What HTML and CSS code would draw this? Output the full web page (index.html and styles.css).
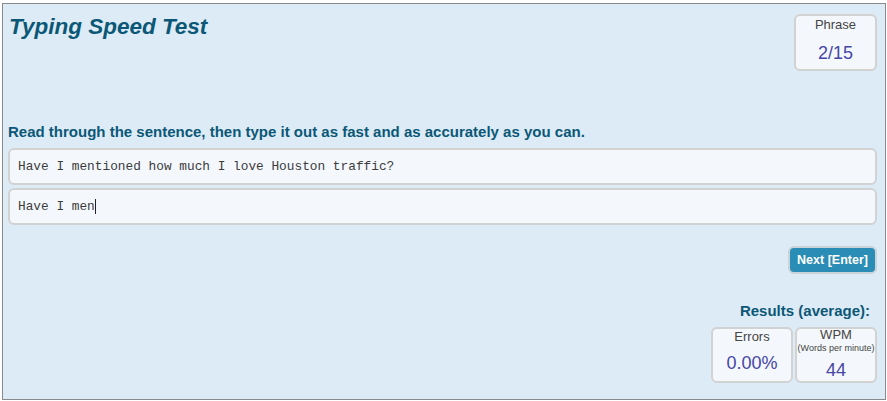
FILE: index.html
```html
<!DOCTYPE html>
<html lang="en">
<head>
    <meta charset="UTF-8">
    <meta name="viewport" content="width=device-width, initial-scale=1.0">
    <title>Typing Speed Test</title>
    <link rel="stylesheet" href="styles.css">
</head>
<body>
    <div class="test">
        <div class="test-header">
            <h1>Typing Speed Test</h1>
            <div class="stat stat-phrase">
                <div class="stat-label">Phrase</div>
                <div class="stat-value">2/15</div>
            </div>
        </div>

        <p class="instructions">Read through the sentence, then type it out as fast and as accurately as you can.</p>

        <div class="phrase-box">Have I mentioned how much I love Houston traffic?</div>
        <div class="phrase-box typed">Have I men<span class="caret"></span></div>

        <div class="actions">
            <button type="button">Next [Enter]</button>
        </div>

        <div class="results">
            <h2>Results (average):</h2>
            <div class="stats">
                <div class="stat">
                    <div class="stat-label">Errors</div>
                    <div class="stat-value">0.00%</div>
                </div>
                <div class="stat stat-wpm">
                    <div class="stat-label">WPM</div>
                    <div class="stat-sub">(Words per minute)</div>
                    <div class="stat-value">44</div>
                </div>
            </div>
        </div>
    </div>
</body>
</html>
```

FILE: styles.css
```css
:root {
    --page-bg: #ddebf7;
    --box-bg: #f4f8fc;
    --box-border: #d2d2d2;
    --heading: #0b5876;
    --value: #4646a6;
    --label: #444;
    --button: #2a8db5;
}

* {
    margin: 0;
    padding: 0;
    box-sizing: border-box;
}

body {
    font-family: "Liberation Sans", Arial, sans-serif;
    background: #fff;
}

.test {
    margin: 3px 0 0 2px;
    width: 884px;
    height: 397px;
    border: 1px solid #8a8a8a;
    background: var(--page-bg);
    padding: 10px 8px 0 5px;
}

.test-header {
    display: flex;
    justify-content: space-between;
    align-items: flex-start;
}

h1 {
    margin: 0 0 0 1px;
    font-size: 22.5px;
    line-height: 25px;
    font-style: italic;
    font-weight: bold;
    color: var(--heading);
}

.stat {
    width: 82px;
    height: 56px;
    border: 2px solid var(--box-border);
    border-radius: 6px;
    background: var(--box-bg);
    text-align: center;
    display: flex;
    flex-direction: column;
    align-items: center;
}

.stat-phrase {
    width: 83px;
    height: 57px;
    padding-top: 1px;
}

.stat-label {
    font-size: 13px;
    line-height: 16px;
    color: var(--label);
}

.stat-value {
    margin-top: 7px;
    font-size: 18px;
    line-height: 22px;
    color: var(--value);
}

.stat-phrase .stat-value {
    margin-top: 9px;
}

.stat-wpm .stat-label {
    margin-top: -2px;
}

.stat-sub {
    font-size: 9px;
    line-height: 11px;
    color: var(--label);
    white-space: nowrap;
}

.stat-wpm .stat-value {
    margin-top: 5px;
}

.instructions {
    margin-top: 52px;
    font-size: 15px;
    line-height: 17px;
    font-weight: bold;
    color: var(--heading);
}

.phrase-box {
    margin-top: 8px;
    height: 37px;
    border: 2px solid var(--box-border);
    border-radius: 6px;
    background: var(--box-bg);
    padding: 0 8px;
    font-family: "Liberation Mono", "Courier New", monospace;
    font-size: 12.8px;
    color: #3c3c3c;
    display: flex;
    align-items: center;
}

.phrase-box.typed {
    margin-top: 3px;
}

.caret {
    display: inline-block;
    width: 1px;
    height: 15px;
    background: #222;
}

.actions {
    display: flex;
    justify-content: flex-end;
    margin-top: 21px;
}

button {
    width: 89px;
    height: 28px;
    background: var(--button);
    color: #fff;
    border: 2px solid #c9d3da;
    border-radius: 6px;
    font-family: inherit;
    font-size: 12.5px;
    font-weight: bold;
    cursor: pointer;
}

.results {
    display: flex;
    flex-direction: column;
    align-items: flex-end;
}

h2 {
    margin: 28px 7px 8px 0;
    font-size: 15px;
    line-height: 17px;
    font-weight: bold;
    color: var(--heading);
}

.stats {
    display: flex;
    gap: 2px;
}
```
